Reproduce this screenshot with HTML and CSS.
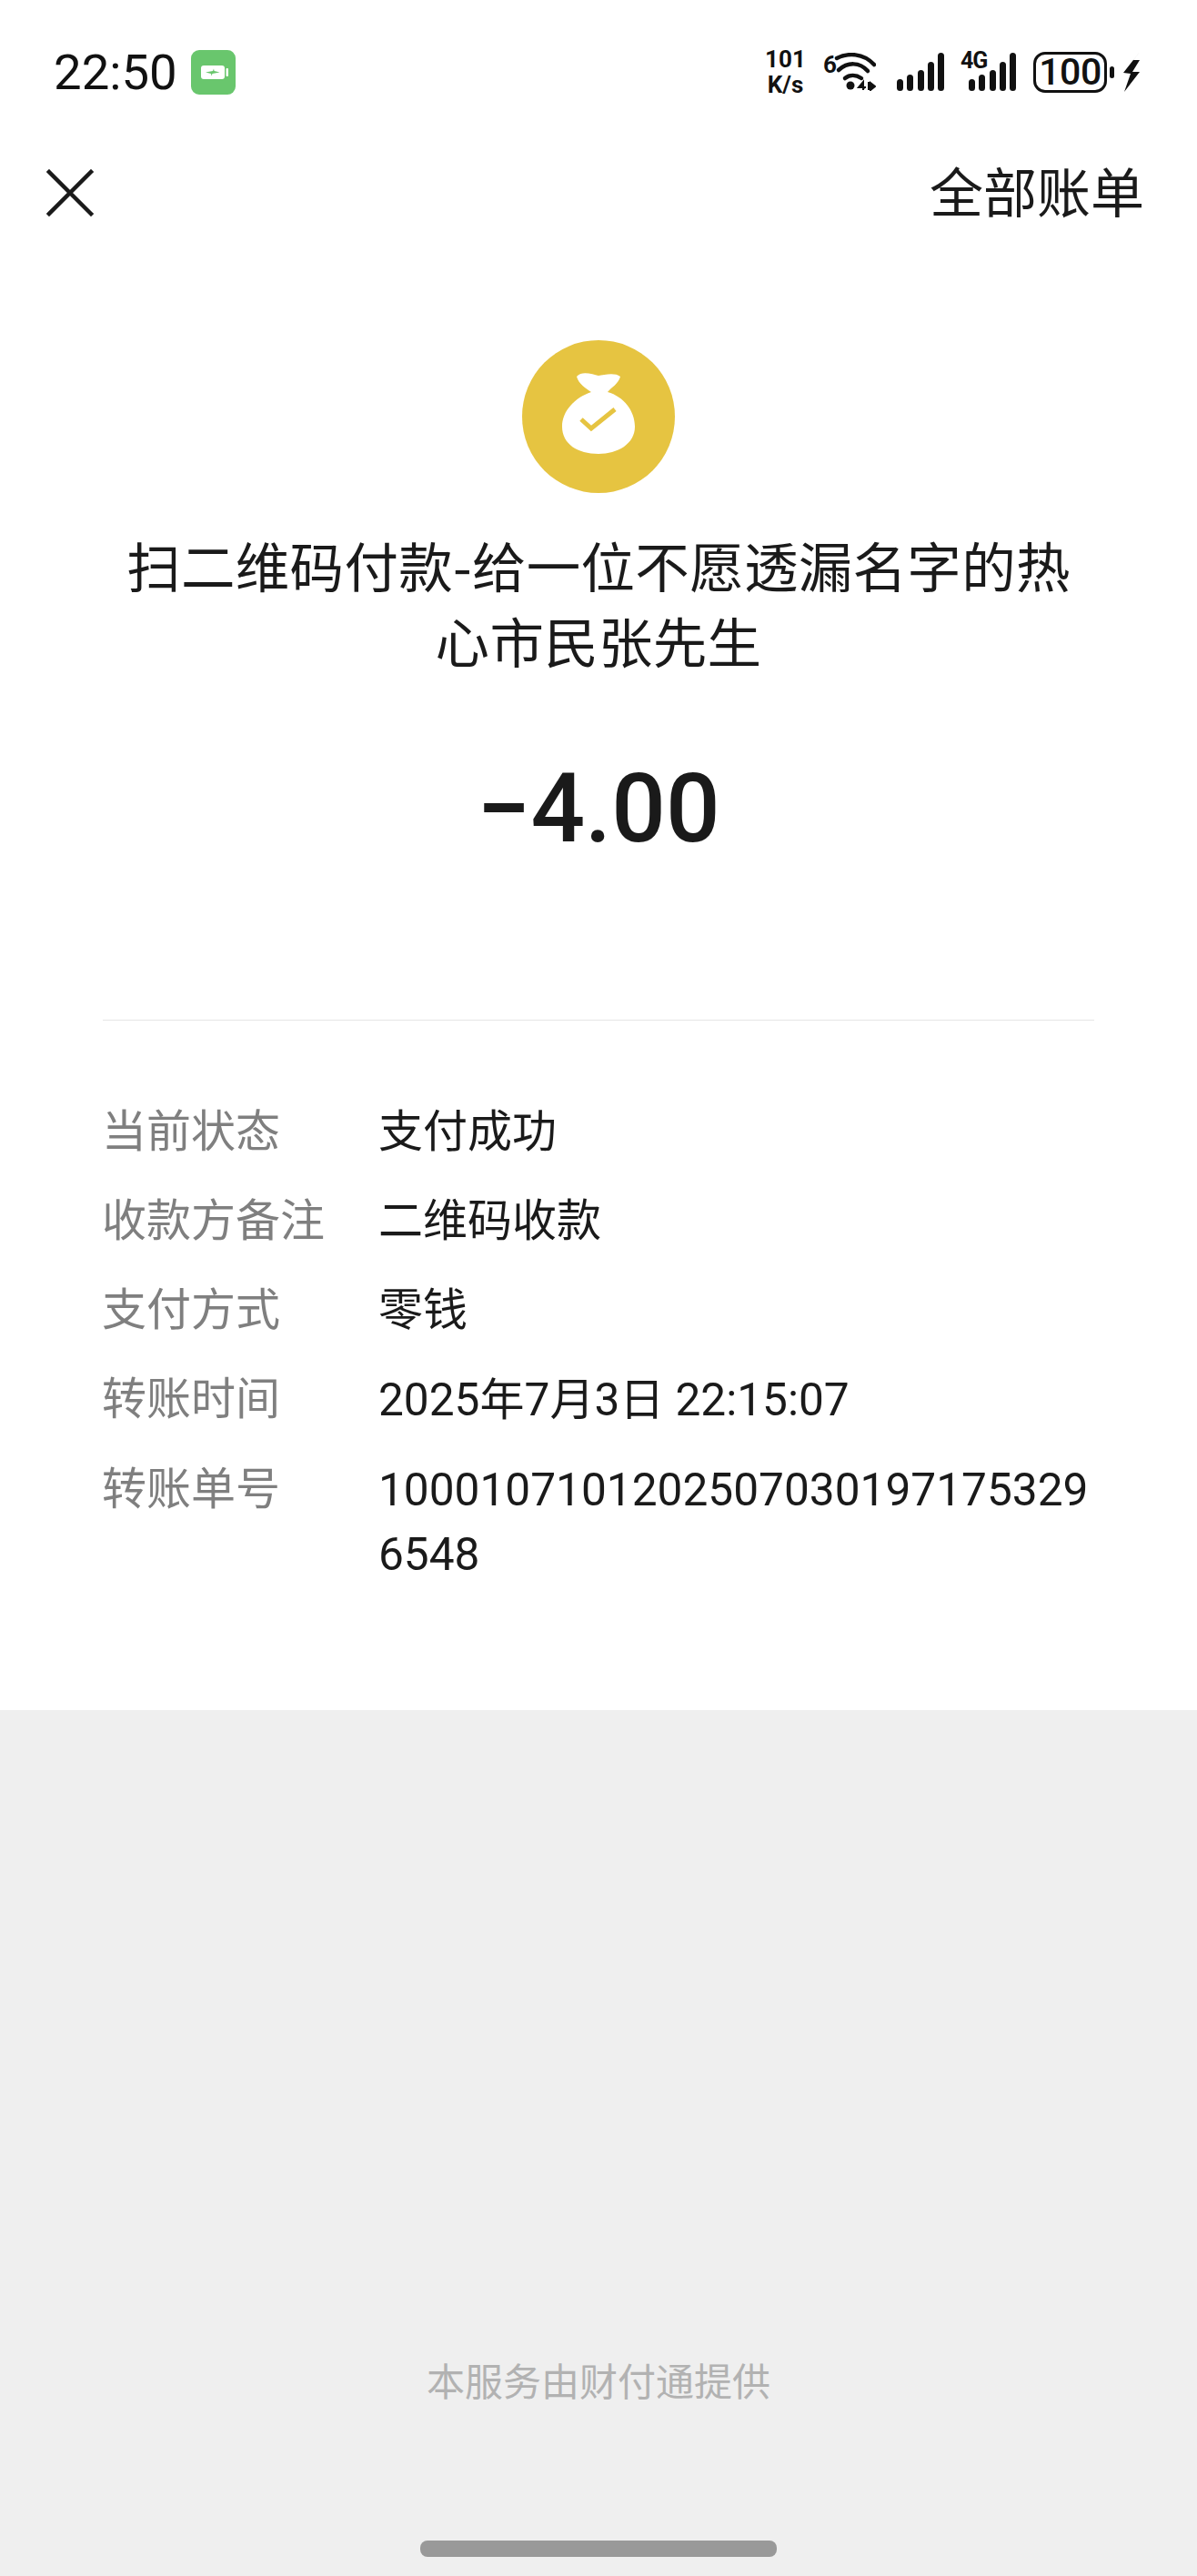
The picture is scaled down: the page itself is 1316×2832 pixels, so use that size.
FILE: index.html
```html
<!DOCTYPE html>
<html lang="zh-CN">
<head>
    <meta charset="UTF-8">
    <title>账单详情</title>
    <link rel="stylesheet" href="styles.css">
</head>
<body>
<div class="page">
    <div class="sheet">
        <div class="status">
            <div class="status-left">
                <span class="time">22:50</span>
                <svg class="charge" width="49" height="49" viewBox="0 0 49 49">
                    <rect width="49" height="49" rx="9" fill="#69c66d"/>
                    <rect x="11" y="17" width="26" height="15" rx="3" fill="#fff"/>
                    <rect x="38.500" y="20" width="2.500" height="9" rx="1" fill="#fff"/>
                    <path d="M16 24.500l8-1.500 1-2.500 .5 2.500 6 1.500-8 1.500-1 2.500-.5-2.500z" fill="#69c66d"/>
                </svg>
            </div>
            <div class="status-right">
                <div class="speed"><span>101</span><span>K/s</span></div>
                <div class="wifi">
                    <span class="wifi-six">6</span>
                    <svg width="46" height="42" viewBox="0 0 46 42" fill="none" stroke="#111" stroke-width="4.500" stroke-linecap="round">
                        <path d="M3 6C15 0 32 0 44 13"/>
                        <path d="M5 19C15 10 28 10 37 20"/>
                        <path d="M12 28C17 24 24 24 30 28"/>
                        <circle cx="18" cy="36" r="4.500" fill="#111" stroke="none"/>
                        <path d="M32 41V32L27 38H35M38 32V41M40 33L45 37L40 41Z" stroke-width="2" fill="#111" stroke-linecap="butt"/>
                    </svg>
                </div>
                <div class="bars">
                    <i class="b1"></i><i class="b2"></i><i class="b3"></i><i class="b4"></i><i class="b5"></i>
                </div>
                <div class="cell">
                    <span class="cell-tag">4G</span>
                    <div class="bars">
                        <i class="b1"></i><i class="b2"></i><i class="b3"></i><i class="b4"></i><i class="b5"></i>
                    </div>
                </div>
                <div class="battery">
                    <span class="battery-body">100</span>
                    <i class="battery-tip"></i>
                    <svg width="18" height="44" viewBox="0 0 18 44">
                        <path d="M18 0L0 23L8 24L1 44L18 22H10L18 9H11Z" fill="#111"/>
                    </svg>
                </div>
            </div>
        </div>

        <div class="nav">
            <svg class="close" width="52" height="52" viewBox="0 0 52 52" stroke="#1a1a1a" stroke-width="4.500" stroke-linecap="square">
                <path d="M3 3L49 49M49 3L3 49"/>
            </svg>
            <a class="all-bills">全部账单</a>
        </div>

        <div class="summary">
            <svg class="bag" width="168" height="168" viewBox="0 0 168 168">
                <circle cx="84" cy="84" r="84" fill="#e6c441"/>
                <path d="M60 40C66 33 78 38 84 39C90 38 102 35 108 40C106 48 98 52 94 57C112 62 124 78 124 95C124 114 105 125 84 125C61 125 44 114 44 95C44 78 58 63 76 57C70 53 62 48 60 40Z" fill="#fff"/>
                <path d="M65 87L76 97L102 76" fill="none" stroke="#e6c441" stroke-width="5"/>
            </svg>
            <h1 class="title">扫二维码付款-给一位不愿透漏名字的热心市民张先生</h1>
            <div class="amount">−4.00</div>
        </div>

        <dl class="detail">
            <div class="row"><dt>当前状态</dt><dd>支付成功</dd></div>
            <div class="row"><dt>收款方备注</dt><dd>二维码收款</dd></div>
            <div class="row"><dt>支付方式</dt><dd>零钱</dd></div>
            <div class="row"><dt>转账时间</dt><dd><span class="num">2025</span>年<span class="num">7</span>月<span class="num">3</span>日 <span class="num">22:15:07</span></dd></div>
            <div class="row"><dt>转账单号</dt><dd><span class="num">10001071012025070301971753296548</span></dd></div>
        </dl>
    </div>

    <div class="foot">
        <p class="provider">本服务由财付通提供</p>
        <div class="home-bar"></div>
    </div>
</div>
</body>
</html>
```

FILE: styles.css
```css
*{
    box-sizing: border-box;
}
html,body{
    margin: 0;
    padding: 0;
}
body{
    width: 1316px;
    height: 2832px;
    overflow: hidden;
    font-family: "Noto Sans CJK SC", Roboto, sans-serif;
    color: #1a1a1a;
    background-color: #efefef;
}
.page{
    display: flex;
    flex-direction: column;
    height: 2832px;
}
.sheet{
    height: 1880px;
    background-color: #fff;
}

/* 状态栏 */
.status{
    display: flex;
    justify-content: space-between;
    align-items: center;
    height: 78px;
    margin-top: 40px;
    padding: 0 63px 0 59px;
    color: #111;
}
.status-left{
    display: flex;
    align-items: center;
    gap: 15px;
}
.time{
    font-family: Roboto, sans-serif;
    font-size: 54.500px;
    line-height: 78px;
}
.status-right{
    display: flex;
    align-items: center;
}
.speed{
    display: flex;
    flex-direction: column;
    align-items: center;
    width: 47px;
    font-family: Roboto, sans-serif;
    font-weight: 700;
    font-size: 26px;
    line-height: 28px;
}
.wifi{
    display: flex;
    align-items: flex-start;
    margin-left: 18px;
}
.wifi-six{
    width: 12px;
    font-family: Roboto, sans-serif;
    font-weight: 700;
    font-size: 26px;
    line-height: 26px;
}
.bars{
    display: flex;
    align-items: flex-end;
    gap: 4.250px;
    height: 42px;
    margin-left: 23px;
}
.bars i{
    display: block;
    width: 7px;
    border-radius: 3.500px;
    background-color: #111;
}
.b1{ height: 13px; }
.b2{ height: 18px; }
.b3{ height: 23px; }
.b4{ height: 32px; }
.b5{ height: 42px; }
.cell{
    position: relative;
    margin-left: 18px;
}
.cell .bars{
    margin-left: 0;
    padding-left: 9px;
}
.cell-tag{
    position: absolute;
    left: 0;
    top: -3px;
    font-family: Roboto, sans-serif;
    font-weight: 700;
    font-size: 25px;
    line-height: 24px;
    letter-spacing: -1px;
    background-color: #fff;
}
.battery{
    display: flex;
    align-items: center;
    margin-left: 19px;
}
.battery-body{
    width: 81px;
    height: 45px;
    border: 3px solid #111;
    border-radius: 13px;
    font-family: Roboto, sans-serif;
    font-weight: 500;
    font-size: 41px;
    line-height: 39px;
    letter-spacing: -0.500px;
    text-align: center;
}
.battery-tip{
    display: block;
    width: 5px;
    height: 13px;
    margin: 0 10px 0 3px;
    border-radius: 2.500px;
    background-color: #111;
}

/* 顶部导航 */
.nav{
    display: flex;
    justify-content: space-between;
    align-items: center;
    height: 90px;
    margin-top: 49px;
    padding: 0 58px 0 51px;
}
.all-bills{
    padding-bottom: 6px;
    font-size: 59px;
    line-height: 84px;
}

/* 金额 */
.summary{
    display: flex;
    flex-direction: column;
    align-items: center;
    padding-top: 117px;
}
.title{
    width: 1060px;
    margin: 37px 0 0;
    font-size: 59.500px;
    font-weight: 400;
    line-height: 83px;
    letter-spacing: 0.300px;
    text-align: center;
}
.amount{
    margin-top: 83px;
    font-family: Roboto, sans-serif;
    font-size: 105px;
    font-weight: 500;
    line-height: 124px;
}

/* 明细 */
.detail{
    margin: 169px 113px 0;
    padding-top: 88px;
    border-top: 1px solid #e5e5e5;
}
.row{
    display: flex;
    margin: 0 0 28px -1px;
    font-family: Roboto, "Noto Sans CJK SC", sans-serif;
    font-size: 49px;
    line-height: 70px;
}
.row dt{
    flex: none;
    width: 304px;
    color: #7f7f7f;
}
.row dd{
    flex: 1;
    min-width: 0;
    margin: 0;
    overflow-wrap: anywhere;
}
.num{
    font-size: 49.600px;
}

/* 底部 */
.foot{
    display: flex;
    flex: 1;
    flex-direction: column;
    align-items: center;
}
.provider{
    margin: 706px 0 0;
    font-size: 42px;
    line-height: 60px;
    color: #b2b2b2;
}
.home-bar{
    width: 392px;
    height: 18px;
    margin-top: 147px;
    border-radius: 8px;
    background-color: #999;
}
```
